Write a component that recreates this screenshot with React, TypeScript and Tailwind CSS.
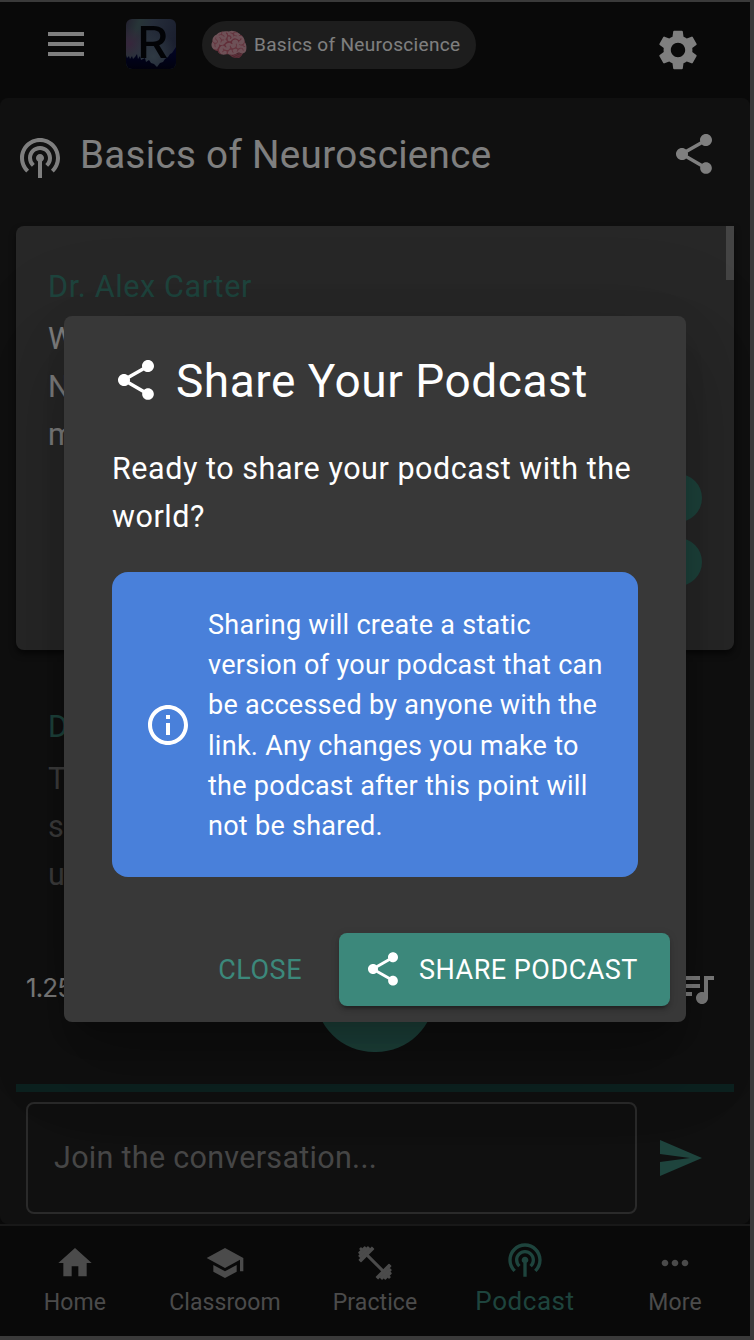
import type { ReactNode } from 'react';
import {
  MdHome,
  MdInfoOutline,
  MdMenu,
  MdMoreHoriz,
  MdPodcasts,
  MdQueueMusic,
  MdSchool,
  MdSend,
  MdSettings,
  MdShare,
} from 'react-icons/md';

function Logo() {
  return (
    <div className="relative h-[50px] w-[50px] overflow-hidden rounded-md">
      <svg viewBox="0 0 50 50" className="h-full w-full">
        <defs>
          <linearGradient id="sky" x1="0" y1="0" x2="1" y2="0.35">
            <stop offset="0" stopColor="#473f5e" />
            <stop offset="0.25" stopColor="#4f6a70" />
            <stop offset="0.5" stopColor="#4b5a74" />
            <stop offset="1" stopColor="#363f5e" />
          </linearGradient>
          <radialGradient id="aurora" cx="0.08" cy="0.5" r="0.35">
            <stop offset="0" stopColor="#6d4c78" />
            <stop offset="1" stopColor="#6d4c78" stopOpacity="0" />
          </radialGradient>
          <radialGradient id="glow" cx="0.55" cy="0.75" r="0.5">
            <stop offset="0" stopColor="#5f7488" />
            <stop offset="1" stopColor="#5f7488" stopOpacity="0" />
          </radialGradient>
          <linearGradient id="trees" x1="0" y1="0" x2="0" y2="1">
            <stop offset="0" stopColor="#04084e" />
            <stop offset="1" stopColor="#02031c" />
          </linearGradient>
        </defs>
        <rect width="50" height="50" fill="url(#sky)" />
        <rect width="50" height="50" fill="url(#aurora)" />
        <rect width="50" height="50" fill="url(#glow)" />
        <path
          fill="url(#trees)"
          d="M0 36L1 39L3 37L4 40L6 37L7 40L9 38L11 35L12 40L14 37L15 41L17 40L19 39L20 43L23 41L25 44L28 45L31 48L34 44L37 43L39 40L42 38L44 35L46 34L48 31L50 28V50H0Z"
        />
      </svg>
      <span className="absolute inset-x-0 top-0 flex h-[50px] origin-center scale-x-110 justify-center pl-[3px] font-['Inter',sans-serif] text-[44px] leading-[46px] font-medium text-[#04070c]">
        R
      </span>
    </div>
  );
}

function Dumbbell() {
  return (
    <svg viewBox="0 0 40 40" className="h-10 w-10 fill-current">
      <g transform="translate(20 20) rotate(45)">
        <rect x="-14" y="-1.5" width="28" height="3" />
        <rect x="-14" y="-9.6" width="3.8" height="19.2" rx="0.8" />
        <rect x="-17" y="-7" width="3.4" height="14" rx="0.8" />
        <rect x="-19.4" y="-4.8" width="3" height="9.6" rx="0.8" />
        <rect x="-21.2" y="-1.4" width="3" height="2.8" />
        <rect x="10.2" y="-9.6" width="3.8" height="19.2" rx="0.8" />
        <rect x="13.6" y="-7" width="3.4" height="14" rx="0.8" />
        <rect x="16.4" y="-4.8" width="3" height="9.6" rx="0.8" />
        <rect x="18.2" y="-1.4" width="3" height="2.8" />
      </g>
    </svg>
  );
}

function NavItem({ icon, label }: { icon: ReactNode; label: string }) {
  return (
    <button className="flex w-[150px] flex-col items-center pt-[17px] text-[#969696]">
      {icon}
      <span className="mt-[5px] text-[23px] leading-[29px] tracking-[0.1px]">{label}</span>
    </button>
  );
}

function ShareDialog() {
  return (
    <div className="absolute inset-0 bg-black/50">
      <div
        role="dialog"
        className="mt-[314px] ml-16 flex h-[706px] w-[622px] flex-col rounded-lg bg-[#383838] text-white shadow-[0_22px_30px_-14px_rgba(0,0,0,0.2),0_48px_76px_6px_rgba(0,0,0,0.14),0_18px_92px_16px_rgba(0,0,0,0.12)]"
      >
        <div className="flex h-32 items-center px-12">
          <MdShare className="h-12 w-12" />
          <h2 className="ml-4 pt-0.5 text-[46px] leading-[60px] tracking-[0.54px]">Share Your Podcast</h2>
        </div>
        <p className="px-12 pt-px text-[30.5px] leading-[48px] tracking-[0.54px]">
          Ready to share your podcast with the
          <br />
          world?
        </p>
        <div className="mx-12 mt-[31px] flex h-[305px] items-center rounded-2xl bg-[#4980da] pl-8">
          <MdInfoOutline className="h-12 w-12" />
          <p className="ml-4 pt-0.5 text-[27px] leading-[40.2px] tracking-[0.28px]">
            Sharing will create a static
            <br />
            version of your podcast that can
            <br />
            be accessed by anyone with the
            <br />
            link. Any changes you make to
            <br />
            the podcast after this point will
            <br />
            not be shared.
          </p>
        </div>
        <div className="mt-auto mr-4 mb-4 flex items-center justify-end text-[27px] tracking-[0.5px]">
          <button className="mr-[37px] pt-0.5 text-[#3c887b]">CLOSE</button>
          <button className="flex h-[73px] w-[331px] items-center rounded-lg bg-[#3c887b] pl-6 shadow-[0_6px_2px_-4px_rgba(0,0,0,0.2),0_4px_4px_rgba(0,0,0,0.14),0_2px_10px_rgba(0,0,0,0.12)]">
            <MdShare className="mb-px h-10 w-10" />
            <span className="ml-4 pt-0.5">SHARE PODCAST</span>
          </button>
        </div>
      </div>
    </div>
  );
}

export default function App() {
  return (
    <div className="h-[1340px] w-[754px] bg-[#3a3a3a] pt-0.5 pr-1 pb-1 font-['Roboto',sans-serif]">
      <div className="relative flex h-[1334px] w-[750px] flex-col overflow-hidden bg-[#121212] text-white">
        <header className="flex h-24 shrink-0 items-start">
          <MdMenu className="mt-[18px] ml-[42px] h-12 w-12" />
          <div className="mt-[17px] ml-9">
            <Logo />
          </div>
          <div className="mt-[19px] ml-[26px] flex h-12 w-[274px] items-center rounded-full bg-[#3a3a3a] pl-[6px]">
            <span className="w-[41px] text-center text-[32px] leading-[46px] brightness-90 hue-rotate-[-14deg] saturate-[0.8]">
              🧠
            </span>
            <span className="ml-[5px] text-[19px] tracking-[0.32px]">Basics of Neuroscience</span>
          </div>
          <MdSettings className="mt-6 ml-[178px] h-12 w-12" />
        </header>

        <main className="flex h-[1126px] shrink-0 flex-col rounded-lg bg-[#202020] px-4">
          <div className="flex h-32 items-start pt-8">
            <MdPodcasts className="mt-1 h-12 w-12" />
            <h1 className="ml-4 pt-px text-[38.5px] leading-[48px] tracking-[0.34px]">Basics of Neuroscience</h1>
            <MdShare className="mr-4 ml-auto h-12 w-12" />
          </div>

          <section className="flex h-[424px] shrink-0 justify-between overflow-hidden rounded-lg rounded-tr-none bg-[#4e4e4e] shadow-[0_4px_6px_rgba(0,0,0,0.5)]">
            <div className="pt-[37px] pl-8 text-[30.5px] leading-[48px] tracking-[0.64px]">
              <p className="mb-1 text-[#3c887b]">Dr. Alex Carter</p>
              <p>
                W
                <br />
                N
                <br />
                m
              </p>
            </div>
            <div className="flex">
              <div className="mt-[248px] mr-6 flex flex-col gap-4">
                <button className="h-12 w-12 rounded-full bg-[#3c887b]" />
                <button className="h-12 w-12 rounded-full bg-[#3c887b]" />
              </div>
              <div className="h-[54px] w-2 bg-[#898989]" />
            </div>
          </section>

          <section className="h-[284px] shrink-0 pt-[53px] pl-8 text-[30.5px] leading-[48px] tracking-[0.64px]">
            <p className="mb-1 text-[#3c887b]">D</p>
            <p className="text-[#7c7c7c]">
              T
              <br />
              s
              <br />
              u
            </p>
          </section>

          <div className="flex h-[118px] shrink-0 items-center justify-between">
            <span className="mb-3 ml-[10px] w-[38px] font-['Inter',sans-serif] text-[26px] tracking-[-0.9px] whitespace-nowrap text-white">
              1.25
            </span>
            <span className="ml-4 h-[118px] w-[120px] rounded-full bg-[#3c887b]" />
            <MdQueueMusic className="mt-[-10px] mr-4 h-12 w-12" />
          </div>

          <div className="mt-8 h-2 shrink-0 bg-[#1a4540]" />

          <div className="mt-[10px] ml-[10px] flex items-center">
            <div className="flex h-28 w-[611px] items-center rounded-lg border-2 border-[#545454] pl-[26px] text-[30.5px] tracking-[0.3px] text-[#8c8c8c]">
              Join the conversation...
            </div>
            <MdSend className="ml-[19px] h-12 w-12 text-[#3c887b]" />
          </div>
        </main>

        <nav className="flex h-28 shrink-0 border-t-2 border-[#303030] bg-[#121212]">
          <NavItem icon={<MdHome className="h-10 w-10" />} label="Home" />
          <NavItem icon={<MdSchool className="h-10 w-10" />} label="Classroom" />
          <NavItem icon={<Dumbbell />} label="Practice" />
          <button className="flex w-[150px] flex-col items-center pt-[14px] text-[#3c887b]">
            <MdPodcasts className="h-10 w-10" />
            <span className="mt-[5px] text-[26px] leading-[32px] tracking-[0.55px]">Podcast</span>
          </button>
          <NavItem icon={<MdMoreHoriz className="h-10 w-10" />} label="More" />
        </nav>

        <ShareDialog />
      </div>
    </div>
  );
}
